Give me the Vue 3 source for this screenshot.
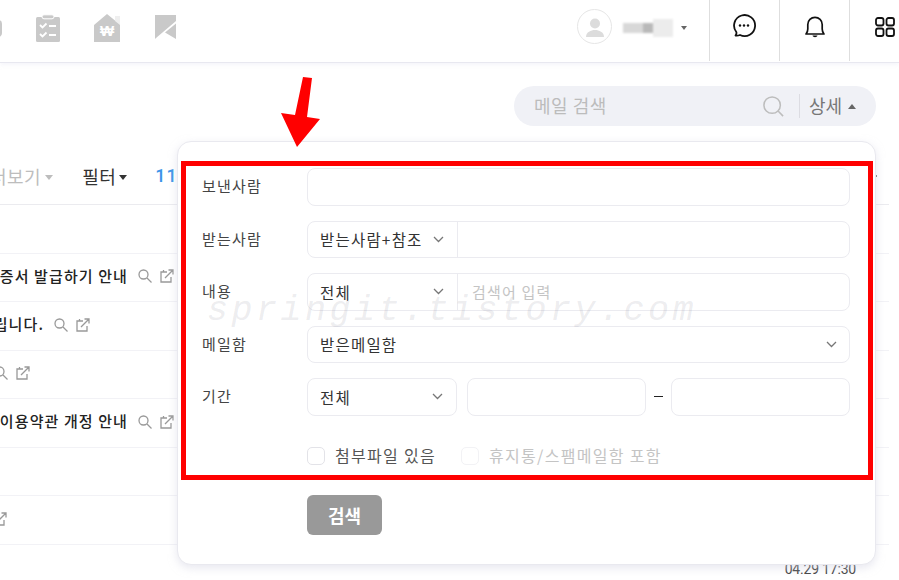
<template>
  <div class="page">
    <header class="topbar">
      <div class="top-left">
        <svg class="nav-icon first" width="26" height="26" viewBox="0 0 26 26"><rect x="0" y="3" width="26" height="17" rx="4" fill="#c9c9c9" /></svg>
        <svg class="nav-icon" width="24" height="28" viewBox="0 0 24 28">
          <rect x="0" y="3" width="24" height="25" rx="1.5" fill="#c9c9c9" />
          <rect x="6" y="0.8" width="12" height="4" rx="2" fill="#c9c9c9" stroke="#fff" stroke-width="1" />
          <path d="M4 11l2.5 2.5 4-4M4 20l2.5 2.5 4-4" fill="none" stroke="#fff" stroke-width="1.8" />
          <path d="M13 12h7M13 21h7" stroke="#fff" stroke-width="1.8" />
        </svg>
        <svg class="nav-icon" width="26" height="28" viewBox="0 0 26 28">
          <path d="M0 11L13 0l8 6.500V2h5v26H0z" fill="#c9c9c9" />
          <path d="M21 7l5 4V2h-5z" fill="#fff" opacity=".7" />
          <text x="13" y="22" text-anchor="middle" class="won">₩</text>
        </svg>
        <svg class="nav-icon" width="22" height="27" viewBox="0 0 22 27">
          <path d="M1 1h21v6L2 24l-1 1z" fill="#c9c9c9" />
          <path d="M22 9.500L11 18.500 22 25z" fill="#c9c9c9" />
        </svg>
      </div>
      <div class="top-right">
        <div class="user">
          <div class="avatar">
            <svg width="22" height="22" viewBox="0 0 22 22"><circle cx="11" cy="7.500" r="5" fill="#dcdcdc" /><path d="M2 21c0-5 5-7 9-7s9 2 9 7z" fill="#dcdcdc" /></svg>
          </div>
          <div class="user-name"><i></i><i></i><i></i></div>
          <span class="user-caret"></span>
        </div>
        <div class="top-cell">
          <svg class="chat" width="24" height="24" viewBox="0 0 24 24">
            <path d="M3.500 21.500c1-1.500 1.200-2.500.8-3.500A10.500 10.500 0 1 1 8 21c-1.500.6-3 .8-4.500.5z" fill="none" stroke="#111" stroke-width="1.800" stroke-linejoin="round" />
            <circle cx="8" cy="11.500" r="1.200" fill="#111" /><circle cx="12" cy="11.500" r="1.200" fill="#111" /><circle cx="16" cy="11.500" r="1.200" fill="#111" />
          </svg>
        </div>
        <div class="top-cell">
          <svg class="bell" width="22" height="24" viewBox="0 0 22 24">
            <path d="M2 19c1-1.500 1.800-2.500 1.800-5V9.500a7.200 7.200 0 0 1 14.400 0V14c0 2.500.8 3.500 1.800 5z" fill="none" stroke="#111" stroke-width="1.700" stroke-linejoin="round" />
            <path d="M8.500 20.500c.5 2.200 4.500 2.200 5 0z" fill="#111" />
          </svg>
        </div>
        <div class="top-cell">
          <svg class="grid" width="20" height="20" viewBox="0 0 20 20" fill="none" stroke="#111" stroke-width="1.800">
            <rect x="1" y="1" width="7.500" height="7.500" rx="2" /><rect x="11.500" y="1" width="7.500" height="7.500" rx="2" />
            <rect x="1" y="11.500" width="7.500" height="7.500" rx="2" /><rect x="11.500" y="11.500" width="7.500" height="7.500" rx="2" />
          </svg>
        </div>
      </div>
    </header>

    <main class="mail">
      <div class="search-row">
        <div class="search-pill">
          <span class="search-text">메일 검색</span>
          <svg class="search-icon" width="21" height="21" viewBox="0 0 23 23" fill="none" stroke="#bdbdbd" stroke-width="1.700">
            <circle cx="10" cy="10" r="9" /><path d="M16.500 16.500l5.500 5.500" />
          </svg>
          <span class="search-divider"></span>
          <span class="search-more">상세</span>
          <span class="caret-up"></span>
        </div>
      </div>

      <div class="toolbar">
        <span class="tool-view">더보기</span>
        <span class="caret-down light"></span>
        <span class="tool-filter">필터</span>
        <span class="caret-down near"></span>
        <span class="tool-count">111</span>
        <span class="tool-tick"></span>
      </div>

      <ul class="mail-list">
        <li v-for="row in rows" :key="row.id" class="mail-row">
          <div v-if="row.end" class="subject" :style="{ width: row.end + 'px' }">
            <span class="subject-text">{{ row.title }}</span>
            <svg class="row-icon" width="14" height="14" viewBox="0 0 14 14" fill="none" stroke="#999" stroke-width="1.300">
              <circle cx="5.500" cy="5.500" r="4.500" /><path d="M9 9l4.500 4.500" />
            </svg>
            <svg class="row-icon" width="14" height="14" viewBox="0 0 14 14" fill="none" stroke="#999" stroke-width="1.300">
              <path d="M7 3H1v10h10V8M3.500 3V1M5 9l8-8M8.500 1H13v4.500" />
            </svg>
          </div>
          <span v-if="row.date" class="row-date">{{ row.date }}</span>
        </li>
      </ul>
    </main>

    <section class="panel">
      <div class="field">
        <label class="field-label">보낸사람</label>
        <div class="control"></div>
      </div>
      <div class="field">
        <label class="field-label">받는사람</label>
        <div class="control">
          <div class="select-part">받는사람+참조<svg class="chev" width="11" height="7" viewBox="0 0 11 7"><path d="M1 1l4.500 4.500L10 1" /></svg></div>
        </div>
      </div>
      <div class="field">
        <label class="field-label">내용</label>
        <div class="control">
          <div class="select-part">전체<svg class="chev" width="11" height="7" viewBox="0 0 11 7"><path d="M1 1l4.500 4.500L10 1" /></svg></div>
          <span class="placeholder">검색어 입력</span>
        </div>
      </div>
      <div class="field">
        <label class="field-label">메일함</label>
        <div class="control wide">받은메일함<svg class="chev" width="11" height="7" viewBox="0 0 11 7"><path d="M1 1l4.500 4.500L10 1" /></svg></div>
      </div>
      <div class="field">
        <label class="field-label">기간</label>
        <div class="period">
          <div class="control period-select">전체<svg class="chev" width="11" height="7" viewBox="0 0 11 7"><path d="M1 1l4.500 4.500L10 1" /></svg></div>
          <div class="control period-date"></div>
          <span class="dash"></span>
          <div class="control period-date"></div>
        </div>
      </div>
      <div class="checks">
        <span class="check"></span>
        <span class="check-label">첨부파일 있음</span>
        <span class="check off"></span>
        <span class="check-label off">휴지통/스팸메일함 포함</span>
      </div>
      <button class="search-btn">검색</button>
    </section>

    <div class="watermark">springit.tistory.com</div>
    <div class="red-box"></div>
    <svg class="red-arrow" width="42" height="72" viewBox="0 0 42 72">
      <path d="M23 0l9 1-5 39 13 2-23 28L1 36l14 2z" fill="#ff0000" />
    </svg>
  </div>
</template>

<script setup>
const rows = [
  { id: 1 },
  { id: 2, end: 174, title: "증서 발급하기 안내" },
  { id: 3, end: 90, title: "립니다." },
  { id: 4, end: 30, title: "" },
  { id: 5, end: 174, title: "이용약관 개정 안내" },
  { id: 6 },
  { id: 7, end: 7, title: "" },
  { id: 8, date: "04.29 17:30" },
];
</script>

<style>
html,
body {
  margin: 0;
  background: #fff;
}
</style>

<style scoped>
.page {
  position: relative;
  width: 899px;
  height: 580px;
  overflow: hidden;
  background: #fff;
  font-family: "Noto Sans CJK KR", "Noto Sans", sans-serif;
  color: #333;
}

.topbar {
  display: flex;
  justify-content: space-between;
  height: 62px;
  border-bottom: 1px solid #e8e8f0;
  box-shadow: 0 2px 4px rgba(225, 225, 240, 0.35);
  box-sizing: content-box;
}

.top-left {
  display: flex;
  gap: 34px;
  align-items: flex-start;
  padding-top: 14px;
  margin-left: -24px;
}

.nav-icon {
  flex-shrink: 0;
}

.nav-icon.first {
  margin-top: 3px;
}

.won {
  fill: #fff;
  font-size: 15px;
  font-weight: 700;
  font-family: "Liberation Sans", sans-serif;
}

.top-right {
  display: flex;
  width: 322px;
}

.user {
  display: flex;
  align-items: flex-start;
  width: 132px;
  flex-shrink: 0;
  padding-top: 9px;
  box-sizing: border-box;
}

.avatar {
  display: flex;
  align-items: flex-end;
  justify-content: center;
  width: 33px;
  height: 33px;
  border: 1px solid #e6e6e6;
  border-radius: 50%;
  overflow: hidden;
}

.avatar svg {
  margin-bottom: 5px;
}

.user-name {
  display: flex;
  align-items: center;
  width: 50px;
  height: 20px;
  margin: 9px 0 0 11px;
  filter: blur(1px);
}

.user-name i {
  display: block;
  height: 10px;
  width: 20px;
  background: #d8d8d8;
}

.user-name i:nth-child(2) {
  width: 10px;
  background: #b9b9b9;
}

.user-name i:nth-child(3) {
  background: #ececec;
  height: 18px;
}

.user-caret {
  margin: 17px 0 0 8px;
  border-left: 3px solid transparent;
  border-right: 3px solid transparent;
  border-top: 4px solid #666;
}

.top-cell {
  display: flex;
  flex-shrink: 0;
  align-items: center;
  justify-content: center;
  width: 70px;
  height: 61px;
  padding-bottom: 9px;
  border-left: 1px solid #dedede;
  box-sizing: border-box;
}

.chat {
  margin-right: 1px;
}

.bell,
.grid {
  margin-top: 2px;
}

.mail {
  width: 889px;
}

.search-row {
  display: flex;
  justify-content: flex-end;
  height: 87px;
  padding: 23px 13px 0 0;
  box-sizing: border-box;
}

.search-pill {
  display: flex;
  align-items: center;
  width: 362px;
  height: 40px;
  padding: 0 20px;
  background: #f0f1f6;
  border-radius: 20px;
  box-sizing: border-box;
}

.search-text {
  flex: 1;
  padding-bottom: 3px;
  font-size: 18px;
  letter-spacing: 0.500px;
  color: #bcbcbc;
}

.search-divider {
  width: 1px;
  height: 24px;
  margin: 0 9px 0 15px;
  background: #dcdce2;
}

.search-more {
  padding-bottom: 3px;
  font-size: 18px;
  color: #777;
}

.caret-up {
  margin-left: 6px;
  border-left: 4px solid transparent;
  border-right: 4px solid transparent;
  border-bottom: 5px solid #666;
}

.toolbar {
  display: flex;
  align-items: center;
  height: 55px;
  margin-left: -10px;
  border-bottom: 1px solid #ebebef;
  box-sizing: border-box;
  font-size: 18px;
  letter-spacing: 0.500px;
  position: relative;
}

.tool-view {
  padding-bottom: 3px;
  color: #bdbdbd;
}

.tool-filter {
  margin-left: 29px;
  padding-bottom: 3px;
  color: #333;
}

.caret-down {
  margin-left: 4px;
  border-left: 4px solid transparent;
  border-right: 4px solid transparent;
  border-top: 5px solid #333;
}

.caret-down.near {
  margin-left: 3px;
}

.caret-down.light {
  border-top-color: #bdbdbd;
}

.tool-count {
  margin-left: 28px;
  padding-bottom: 3px;
  font-family: "Roboto", sans-serif;
  font-weight: 500;
  letter-spacing: 1px;
  color: #3b95e9;
}

.tool-tick {
  position: absolute;
  right: 12px;
  top: 25px;
  width: 1px;
  height: 2px;
  background: #777;
}

.mail-list {
  margin: 0;
  padding: 0;
  list-style: none;
}

.mail-row {
  display: flex;
  align-items: center;
  justify-content: space-between;
  height: 48.5px;
  border-bottom: 1px solid #f2f2f6;
  box-sizing: border-box;
}

.subject {
  display: flex;
  align-items: center;
  justify-content: flex-end;
  flex-shrink: 0;
  margin-top: -2px;
  overflow: hidden;
}

.subject-text {
  flex-shrink: 0;
  margin-right: 2px;
  padding-bottom: 2px;
  font-size: 15px;
  font-weight: 500;
  letter-spacing: 1.100px;
  color: #222;
  white-space: nowrap;
}

.row-icon {
  flex-shrink: 0;
  margin-left: 8px;
}

.row-date {
  margin: 2px 33px 0 auto;
  font-family: "Roboto", sans-serif;
  font-size: 14px;
  letter-spacing: -0.200px;
  color: #444;
}

.panel {
  position: absolute;
  left: 177px;
  top: 141px;
  width: 699px;
  height: 424px;
  padding: 26px 25px 0 24px;
  background: #fff;
  border: 1px solid #e9e9ef;
  border-radius: 14px;
  box-shadow: 0 3px 8px rgba(210, 210, 225, 0.5);
  box-sizing: border-box;
}

.field {
  display: flex;
  align-items: center;
  height: 37.5px;
  margin-bottom: 15px;
}

.field-label {
  width: 105px;
  flex-shrink: 0;
  margin-top: -2px;
  font-size: 15px;
  letter-spacing: 1.200px;
  color: #444;
}

.control {
  display: flex;
  align-items: center;
  flex: 1;
  height: 100%;
  border: 1px solid #ebebf0;
  border-radius: 8px;
  box-sizing: border-box;
  font-size: 15.500px;
  letter-spacing: 1.200px;
  color: #333;
}

.select-part {
  display: flex;
  align-items: center;
  justify-content: space-between;
  width: 150px;
  height: 100%;
  padding: 0 13px 0 12px;
  border-right: 1px solid #ebebf0;
  box-sizing: border-box;
}

.chev {
  fill: none;
  stroke: #777;
  stroke-width: 1.300;
  flex-shrink: 0;
}

.placeholder {
  margin-left: 14px;
  font-size: 15px;
  color: #c4c4c4;
}

.control.wide {
  justify-content: space-between;
  padding: 0 12px;
}

.period {
  display: flex;
  align-items: center;
  flex: 1;
  height: 100%;
}

.period-select {
  flex: none;
  justify-content: space-between;
  width: 150px;
  padding: 0 13px 0 12px;
}

.period-date {
  flex: none;
  width: 179px;
}

.period-select + .period-date {
  margin-left: 10px;
}

.dash {
  width: 9px;
  height: 1px;
  margin: 0 8px;
  background: #222;
}

.checks {
  display: flex;
  align-items: center;
  margin: 31px 0 0 105px;
  height: 18px;
}

.check {
  width: 18px;
  height: 18px;
  border: 1px solid #e3e3e8;
  border-radius: 5px;
  box-sizing: border-box;
}

.check.off {
  margin-left: 25px;
  border-color: #f2f2f5;
}

.check-label {
  margin-left: 10px;
  padding-bottom: 1px;
  font-size: 16px;
  letter-spacing: 1.300px;
  color: #555;
}

.check-label.off {
  color: #c4c4c4;
}

.search-btn {
  display: block;
  width: 75px;
  height: 40px;
  margin: 30px 0 0 105px;
  padding: 0;
  border: 0;
  border-radius: 6px;
  background: #999;
  color: #fff;
  font-family: inherit;
  font-size: 18px;
  font-weight: 700;
}

.watermark {
  position: absolute;
  left: 207px;
  top: 291px;
  font-family: "Liberation Mono", monospace;
  font-style: italic;
  font-size: 35px;
  letter-spacing: 3.500px;
  color: rgba(120, 120, 140, 0.14);
  white-space: nowrap;
  pointer-events: none;
}

.red-box {
  position: absolute;
  left: 181px;
  top: 161px;
  width: 692px;
  height: 319px;
  border: 5px solid #ff0000;
  box-sizing: border-box;
  pointer-events: none;
}

.red-arrow {
  position: absolute;
  left: 280px;
  top: 77px;
}
</style>
